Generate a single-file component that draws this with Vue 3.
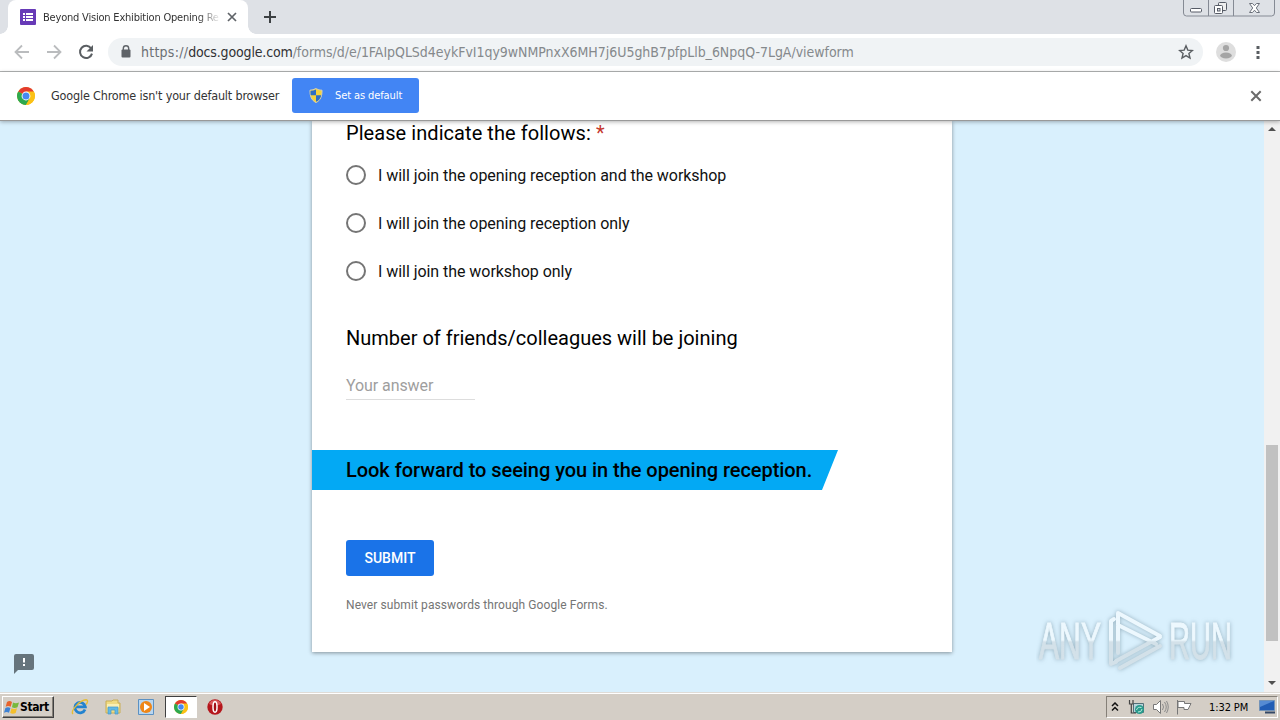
<template>
  <div class="screen">
    <header class="tabstrip">
      <div class="tab">
        <svg class="tab-icon" width="16" height="16" viewBox="0 0 16 16">
          <rect width="16" height="16" rx="1" fill="#673ab7" />
          <path d="M3 4h2v2H3zM3 7h2v2H3zM3 10h2v2H3zM6 4h7v2H6zM6 7h7v2H6zM6 10h7v2H6z" fill="#fff" />
        </svg>
        <span class="tab-title">Beyond Vision Exhibition Opening Re</span>
        <svg class="tab-close" width="10" height="10" viewBox="0 0 10 10">
          <path d="M1 1l8 8M9 1l-8 8" stroke="#5f6368" stroke-width="1.7" />
        </svg>
      </div>
      <svg class="new-tab" width="12" height="12" viewBox="0 0 12 12">
        <path d="M6 0v12M0 6h12" stroke="#3c4043" stroke-width="2" />
      </svg>
      <svg class="window-buttons" width="94" height="18" viewBox="0 0 94 18">
        <path d="M1.500-1v14q0 3 3 3h85q3 0 3-3V-1M26.500 0v16M51.500 0v16" fill="none" stroke="#858a94" />
        <rect x="8.500" y="8.500" width="11" height="3.500" rx="1" fill="#fff" stroke="#565b66" />
        <rect x="36.500" y="2.500" width="8" height="8" rx="1" fill="#eee" stroke="#565b66" />
        <rect x="32.500" y="5.500" width="8" height="8" rx="1" fill="#fff" stroke="#565b66" />
        <rect x="35.500" y="8.500" width="2.500" height="2.500" fill="#dee1e6" stroke="#565b66" />
        <path d="M67.500 3.500h3l2 2.200 2-2.200h3L74.300 8l3.200 4.500h-3l-2-2.300-2 2.300h-3L70.700 8z" fill="#fff" stroke="#6b707a" />
      </svg>
    </header>

    <div class="toolbar">
      <svg class="nav" width="16" height="16" viewBox="0 0 16 16">
        <path d="M15 8H2M8 1.500L1.500 8 8 14.500" fill="none" stroke="#babcbe" stroke-width="1.800" />
      </svg>
      <svg class="nav" width="16" height="16" viewBox="0 0 16 16">
        <path d="M1 8h13M8 1.500L14.500 8 8 14.500" fill="none" stroke="#babcbe" stroke-width="1.800" />
      </svg>
      <svg class="nav" width="16" height="16" viewBox="0 0 16 16">
        <path d="M13.200 4.500A6.100 6.100 0 1 0 14 9.600" fill="none" stroke="#5a5e62" stroke-width="2" />
        <path d="M15 1v6.500H8.500z" fill="#5a5e62" />
      </svg>
      <div class="omnibox">
        <svg width="10" height="13" viewBox="0 0 10 13">
          <path d="M2.300 6V3.400a2.700 2.700 0 0 1 5.400 0V6" fill="none" stroke="#5f6368" stroke-width="1.400" />
          <rect x="0.500" y="4.500" width="9" height="8" rx="1" fill="#5f6368" />
        </svg>
        <div class="url">
          <span class="scheme">https://</span><span class="domain">docs.google.com</span><span class="path">/forms/d/e/1FAIpQLSd4eykFvI1qy9wNMPnxX6MH7j6U5ghB7pfpLlb_6NpqQ-7LgA/viewform</span>
        </div>
        <svg class="star" width="16" height="16" viewBox="0 0 16 16">
          <path d="M8 1.800l1.800 4.300 4.600.4-3.500 3 1.100 4.600L8 11.600l-4 2.500 1.100-4.600-3.500-3 4.600-.4z" fill="none" stroke="#5a5e62" stroke-width="1.400" />
        </svg>
      </div>
      <svg class="avatar" width="20" height="20" viewBox="0 0 20 20">
        <circle cx="10" cy="10" r="10" fill="#dedede" />
        <circle cx="10" cy="6" r="3.100" fill="#a5a5a5" />
        <ellipse cx="10" cy="13.500" rx="5.800" ry="3" fill="#a5a5a5" />
      </svg>
      <svg class="more" width="4" height="14" viewBox="0 0 4 14">
        <path d="M.5 1h3v3h-3zM.5 6h3v3h-3zM.5 11h3v3h-3z" fill="#5a5e62" />
      </svg>
    </div>

    <div class="infobar">
      <svg class="chrome" width="18" height="18" viewBox="0 0 20 20">
        <circle cx="10" cy="10" r="10" fill="#fbc116" />
        <path d="M10 10L1.340 5A10 10 0 0 1 18.660 5z" fill="#e33b2e" />
        <path d="M10 10L1.340 5A10 10 0 0 0 10 20l4.300-7.500z" fill="#2da94f" />
        <path d="M10 5h8.660A10 10 0 0 1 10 20l4.330-7.500z" fill="#fbc116" />
        <circle cx="10" cy="10" r="4.900" fill="#fff" />
        <circle cx="10" cy="10" r="3.900" fill="#4688f1" />
      </svg>
      <span class="info-text">Google Chrome isn't your default browser</span>
      <button class="default-btn">
        <svg width="14" height="15" viewBox="0 0 14 15">
          <path d="M7 .5Q4 2.200 1 2.200C.8 8 2.500 12.500 7 14.500 11.500 12.500 13.200 8 13 2.200 10 2.200 7 .5 7 .5z" fill="#f5d33c" stroke="#d9d3b0" />
          <path d="M7 1.500V7.300H1.700Q1.400 5 1.500 2.800 4.500 2.800 7 1.500zM7 7.300h5.300Q11.300 12 7 13.800z" fill="#2f6fc4" />
        </svg>
        <span>Set as default</span>
      </button>
      <svg class="info-close" width="12" height="12" viewBox="0 0 12 12">
        <path d="M1.300 1.300l9.400 9.400M10.700 1.300l-9.400 9.400" stroke="#6b6b6b" stroke-width="2" />
      </svg>
    </div>

    <main class="page">
      <div class="canvas">
        <form class="form-card" @submit.prevent>
          <h2 class="question first">Please indicate the follows: <span class="required">*</span></h2>
          <label v-for="option in options" :key="option" class="option">
            <span class="radio"></span>
            <span>{{ option }}</span>
          </label>
          <h2 class="question second">Number of friends/colleagues will be joining</h2>
          <div class="answer">Your answer</div>
          <div class="banner"><span>Look forward to seeing you in the opening reception.</span></div>
          <button class="submit">SUBMIT</button>
          <p class="notice">Never submit passwords through Google Forms.</p>
        </form>
      </div>
      <div class="scrollbar">
        <svg class="arrow-up" width="8" height="4" viewBox="0 0 8 4"><path d="M0 4l4-4 4 4z" fill="#505050" /></svg>
        <div class="thumb"></div>
        <svg class="arrow-down" width="8" height="4" viewBox="0 0 8 4"><path d="M0 0l4 4 4-4z" fill="#505050" /></svg>
      </div>
      <svg class="feedback" width="20" height="20" viewBox="0 0 20 20">
        <path d="M2 0h16q2 0 2 2v12q0 2-2 2H4l-4 4V2q0-2 2-2z" fill="#66747c" />
        <path d="M9 4h2v4.500H9zM9 10h2v2H9z" fill="#fff" />
      </svg>
      <svg class="watermark" width="210" height="70" viewBox="0 0 210 70">
        <defs>
          <linearGradient id="fade" gradientUnits="userSpaceOnUse" x1="0" y1="0" x2="0" y2="66">
            <stop offset="0.500" stop-color="#edf8fe" />
            <stop offset="0.530" stop-color="#d3e1e9" />
          </linearGradient>
        </defs>
        <g class="mark">
          <text x="3" y="52" textLength="62" lengthAdjust="spacingAndGlyphs">ANY</text>
          <path d="M78 12l-3 2v43l5-2M82 46V6l42 23M82 18l38 19M80 54l44-24M84 61l40-22" />
          <text x="133" y="52" textLength="63" lengthAdjust="spacingAndGlyphs">RUN</text>
        </g>
      </svg>
    </main>

    <footer class="taskbar">
      <div class="start">
        <svg width="16" height="15" viewBox="0 0 16 15">
          <path d="M3 2q2.500-1.800 5 0L6.700 6.800q-2.500-1.500-5 0z" fill="#e8632b" />
          <path d="M9 2.500q2.500 1.500 6 0l-1.500 4.800q-3 1.500-5.500 0z" fill="#78b83b" />
          <path d="M1.400 8q2.500-1.500 5 0L5 12.800q-2.300-1.500-5 0z" fill="#3e82d4" />
          <path d="M7.500 8.300q2.500 1.500 5.500 0L11.700 13q-2.800 1.500-5.500 0z" fill="#f4bf2c" />
        </svg>
        <span>Start</span>
      </div>
      <div class="launchers">
        <svg width="18" height="18" viewBox="0 0 18 18">
          <path d="M14 11.500a5.200 5.200 0 1 1 .3-2.700H5" fill="none" stroke="#2383cf" stroke-width="2.800" />
          <path d="M2 16C-1 13 9 2 15 1.800c2.500.1 1.500 3.200 0 4.700" fill="none" stroke="#e5bd35" stroke-width="1.400" />
        </svg>
        <svg width="18" height="18" viewBox="0 0 18 18">
          <path d="M2 3h6l1-1h5v3h2v10H2z" fill="#f0db83" stroke="#c9ad55" />
          <path d="M3 6h12v4H3z" fill="#f9efb5" />
          <path d="M4 16V9h10v7h-3v-4H7v4z" fill="#62b9e5" stroke="#429acb" stroke-width=".7" />
        </svg>
        <svg width="18" height="18" viewBox="0 0 18 18">
          <path d="M1.500 1.500h15v15h-15z" fill="#b9d6ef" stroke="#5b91c3" />
          <circle cx="9" cy="9" r="6" fill="#ef8617" />
          <path d="M7 5l6 4-6 4z" fill="#fff" />
        </svg>
        <div class="active">
          <svg width="14" height="14" viewBox="0 0 20 20">
            <circle cx="10" cy="10" r="10" fill="#fbc116" />
            <path d="M10 10L1.340 5A10 10 0 0 1 18.660 5z" fill="#e33b2e" />
            <path d="M10 10L1.340 5A10 10 0 0 0 10 20l4.300-7.500z" fill="#2da94f" />
            <path d="M10 5h8.660A10 10 0 0 1 10 20l4.330-7.500z" fill="#fbc116" />
            <circle cx="10" cy="10" r="4.900" fill="#fff" />
            <circle cx="10" cy="10" r="3.900" fill="#4688f1" />
          </svg>
        </div>
        <svg width="16" height="16" viewBox="0 0 16 16">
          <circle cx="8" cy="8" r="7.700" fill="#b5161c" />
          <path d="M2 5a6.500 6.500 0 0 1 12 0q-6 3-12 0z" fill="#d9575a" />
          <ellipse cx="8" cy="8" rx="2" ry="5.200" fill="#a30f16" stroke="#fff" stroke-width="1.500" />
        </svg>
      </div>
      <div class="tray">
        <svg width="8" height="10" viewBox="0 0 8 10">
          <path d="M1 4l3-3 3 3M1 8.500l3-3 3 3" fill="none" stroke="#111" stroke-width="1.500" />
        </svg>
        <svg class="network" width="17" height="16" viewBox="0 0 17 16">
          <path d="M5.500 4.500h10v9h-10z" fill="#b7d3da" stroke="#527078" />
          <path d="M1.500 1v4h3.500V1M3.300 5v9H8" fill="none" stroke="#444" stroke-width="1.200" />
          <circle cx="11.500" cy="10.500" r="4.500" fill="#299a8c" />
          <path d="M8.500 11q1-3.500 5-2.500M14 10q-.5 3.500-4 3" fill="none" stroke="#bcebdd" />
        </svg>
        <svg class="volume" width="17" height="16" viewBox="0 0 17 16">
          <path d="M1.500 5.500h3L8.500 1.500v13l-4-4h-3z" fill="#fff" stroke="#777" />
          <path d="M10.500 5q2 3 0 6M12.500 3q3.500 5 0 10M14.500 2q3.500 6 0 12" fill="none" stroke="#8b8b8b" />
        </svg>
        <svg class="flag" width="17" height="16" viewBox="0 0 17 16">
          <path d="M1.500 1v14.500M2 2.500h6.500v2h6.500l-3 6H8v-2H2z" fill="#fff" stroke="#777" />
        </svg>
        <span class="clock">1:32 PM</span>
        <svg width="17" height="14" viewBox="0 0 17 14">
          <path d="M.5.500h15v10H.5z" fill="#225db5" stroke="#7393b8" />
          <path d="M1 1h14L1 7z" fill="#568bd3" />
          <path d="M6 12.500h10" stroke="#344866" stroke-width="2" />
        </svg>
      </div>
    </footer>
  </div>
</template>

<script setup>
const options = [
  'I will join the opening reception and the workshop',
  'I will join the opening reception only',
  'I will join the workshop only',
];
</script>

<style>
body {
  margin: 0;
  overflow: hidden;
}
</style>

<style scoped>
* {
  box-sizing: border-box;
}

svg {
  display: block;
  flex: none;
}

button {
  border: 0;
  padding: 0;
}

.screen {
  width: 1280px;
  height: 720px;
  display: flex;
  flex-direction: column;
  overflow: hidden;
  font-family: "DejaVu Sans Condensed", "DejaVu Sans", sans-serif;
  font-stretch: condensed;
  color: #333;
  white-space: nowrap;
}

.tabstrip {
  height: 34px;
  flex: none;
  display: flex;
  align-items: flex-start;
  background: #dee1e6;
}

.tab {
  width: 240px;
  height: 34px;
  margin-left: 8px;
  padding: 0 11px 0 12px;
  display: flex;
  align-items: center;
  background: #fff;
  border-radius: 8px 8px 0 0;
  position: relative;
}

.tab::before,
.tab::after {
  content: "";
  position: absolute;
  bottom: 0;
  width: 8px;
  height: 8px;
}

.tab::before {
  left: -8px;
  background: radial-gradient(circle at 0 0, #dee1e6 7.500px, #fff 8px);
}

.tab::after {
  right: -8px;
  background: radial-gradient(circle at 100% 0, #dee1e6 7.500px, #fff 8px);
}

.tab-title {
  width: 176px;
  margin-left: 7px;
  font-size: 11px;
  letter-spacing: -0.200px;
  -webkit-mask-image: linear-gradient(to right, #000 155px, transparent 178px);
  mask-image: linear-gradient(to right, #000 155px, transparent 178px);
}

.tab-close {
  margin-left: auto;
}

.new-tab {
  margin: 11px 0 0 16px;
}

.window-buttons {
  margin: 0 4px 0 auto;
}

.toolbar {
  height: 38px;
  flex: none;
  padding: 0 20px 2px 14px;
  display: flex;
  align-items: center;
  background: #fff;
  border-bottom: 1px solid #b3b5b5;
}

.nav {
  margin-right: 16px;
}

.omnibox {
  width: 1095px;
  height: 28px;
  margin-left: -2px;
  padding: 0 9px 0 13px;
  display: flex;
  align-items: center;
  background: #f0f3f5;
  border-radius: 14px;
}

.url {
  margin-left: 10px;
  font-size: 14px;
  letter-spacing: -0.035px;
  color: #85898c;
}

.scheme {
  letter-spacing: 0.250px;
  color: #6b6f73;
}

.domain {
  letter-spacing: -0.150px;
  color: #303134;
}

.star {
  margin-left: auto;
}

.avatar {
  margin-left: 13px;
}

.more {
  margin-left: auto;
}

.infobar {
  height: 49px;
  flex: none;
  padding: 0 18px 1px 17px;
  display: flex;
  align-items: center;
  background: #fff;
  border-bottom: 1px solid #999;
  box-shadow: 0 1px 4px rgba(0, 0, 0, 0.3);
  z-index: 2;
}

.info-text {
  width: 229px;
  margin: 0 12px 0 16px;
  font-size: 12.500px;
  letter-spacing: -0.170px;
}

.default-btn {
  width: 127px;
  height: 35px;
  padding-left: 17px;
  display: flex;
  align-items: center;
  gap: 12px;
  background: #4285f4;
  border-radius: 3px;
  color: #fff;
  font-family: inherit;
  font-stretch: inherit;
  font-size: 11px;
  letter-spacing: -0.100px;
}

.info-close {
  margin-left: auto;
}

.page {
  height: 571px;
  flex: none;
  display: flex;
  position: relative;
  background: #d9f0fd;
}

.canvas {
  width: 1264px;
}

.form-card {
  width: 640px;
  height: 531px;
  margin-left: 312px;
  padding-left: 34px;
  background: #fff;
  box-shadow: 0 1px 4px rgba(0, 0, 0, 0.4);
  font-family: Roboto, sans-serif;
  font-stretch: normal;
  color: #111;
}

.question {
  margin: 0;
  font-size: 20px;
  font-weight: 400;
  line-height: 24px;
  color: #000;
}

.required {
  color: #c5372c;
}

.option {
  height: 48px;
  display: flex;
  align-items: center;
  font-size: 16px;
  letter-spacing: -0.050px;
}

.first {
  margin-bottom: 6px;
  letter-spacing: 0.060px;
}

.radio {
  width: 20px;
  height: 20px;
  margin-right: 12px;
  border: 2px solid #757575;
  border-radius: 50%;
}

.second {
  margin-top: 31px;
}

.answer {
  width: 129px;
  height: 24px;
  margin-top: 26px;
  border-bottom: 1px solid #ddd;
  font-size: 16px;
  line-height: 20px;
  letter-spacing: -0.080px;
  color: #9e9e9e;
}

.banner {
  width: 526px;
  height: 40px;
  margin: 50px 0 50px -34px;
  padding-left: 34px;
  background: #03a9f4;
  clip-path: polygon(0 0, 100% 0, 510px 100%, 0 100%);
  font-size: 20px;
  font-weight: 500;
  line-height: 40px;
  letter-spacing: -0.050px;
  color: #000;
}

.submit {
  width: 88px;
  height: 36px;
  display: block;
  background: #1a73e8;
  border-radius: 3px;
  color: #fff;
  font-family: Roboto, sans-serif;
  font-size: 14px;
  font-weight: 500;
}

.notice {
  margin: 21px 0 0;
  font-size: 12px;
  line-height: 16px;
  letter-spacing: 0.090px;
  color: #757575;
}

.scrollbar {
  width: 16px;
  display: flex;
  flex-direction: column;
  align-items: center;
  background: #f1f1f1;
}

.arrow-up {
  margin-top: 6px;
}

.thumb {
  width: 12px;
  height: 196px;
  margin-top: 314px;
  background: #c1c1c1;
}

.arrow-down {
  margin-top: 40px;
}

.feedback {
  position: absolute;
  left: 14px;
  top: 533px;
}

.watermark {
  position: absolute;
  left: 1036px;
  top: 486px;
}

.mark {
  filter: drop-shadow(0 0 2px rgba(80, 110, 125, 0.5));
}

.mark text {
  font-family: "Liberation Sans Narrow", "Liberation Sans", sans-serif;
  font-size: 51px;
  fill: url(#fade);
  stroke: url(#fade);
  stroke-width: 1px;
}

.mark path {
  fill: none;
  stroke: url(#fade);
  stroke-width: 4px;
  stroke-linecap: round;
  stroke-linejoin: round;
}

.taskbar {
  height: 28px;
  flex: none;
  padding: 3px 2px 0 2px;
  display: flex;
  align-items: flex-start;
  background: #d4cec6;
  border-top: 1px solid #dfdcd7;
  box-shadow: inset 0 1px #fff;
}

.start {
  width: 52px;
  height: 22px;
  padding-left: 1px;
  display: flex;
  align-items: center;
  gap: 0;
  border: 1px solid;
  border-color: #fff #404040 #404040 #fff;
  box-shadow: inset -1px -1px #858078;
  color: #000;
  font-size: 12px;
  font-weight: 700;
  letter-spacing: -0.400px;
}

.launchers {
  height: 22px;
  margin-left: 17px;
  display: flex;
  align-items: center;
  gap: 15px;
}

.active {
  width: 32px;
  height: 22px;
  margin: 0 -5px 0 -5px;
  display: flex;
  align-items: center;
  justify-content: center;
  background: #fff;
  border: 1px solid;
  border-color: #404040 #fff #fff #404040;
}

.tray {
  width: 172px;
  height: 22px;
  margin-left: auto;
  padding: 0 1px 0 4px;
  display: flex;
  align-items: center;
  border: 1px solid;
  border-color: #858078 #fff #fff #858078;
  color: #000;
}

.network {
  margin-left: 9px;
}

.volume {
  margin-left: 7px;
}

.flag {
  margin-left: 7px;
}

.clock {
  width: 40px;
  margin: 0 10px 0 16px;
  font-size: 11px;
  letter-spacing: -0.100px;
}
</style>
